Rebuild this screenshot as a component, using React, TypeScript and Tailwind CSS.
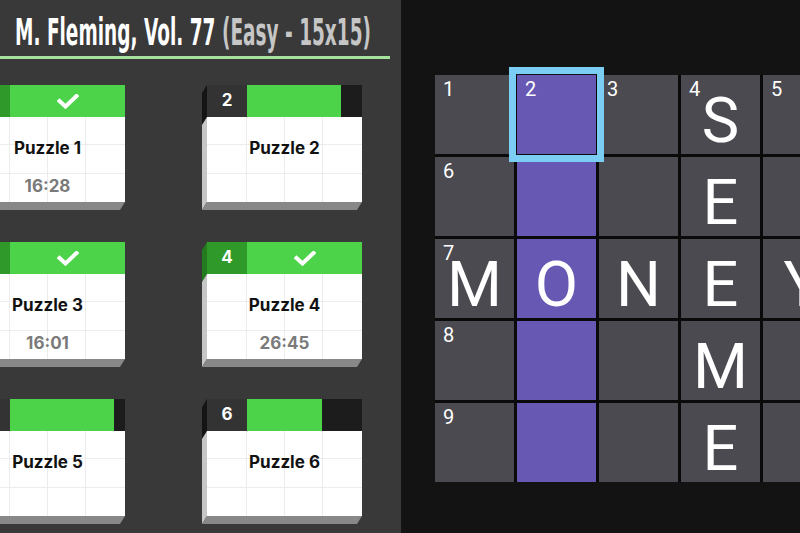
import React from "react";

type Puzzle = { n: number; done: boolean; progress: number; time?: string };

const puzzles: Puzzle[] = [
  { n: 1, done: true, progress: 100, time: "16:28" },
  { n: 2, done: false, progress: 82 },
  { n: 3, done: true, progress: 100, time: "16:01" },
  { n: 4, done: true, progress: 100, time: "26:45" },
  { n: 5, done: false, progress: 90 },
  { n: 6, done: false, progress: 65 },
];

// 5x5 corner of the board: hl = highlighted clue column, letters are filled answers
const board: { num?: number; letter?: string; hl?: boolean }[][] = [
  [{ num: 1 }, { num: 2, hl: true }, { num: 3 }, { num: 4, letter: "S" }, { num: 5 }],
  [{ num: 6 }, { hl: true }, {}, { letter: "E" }, {}],
  [{ num: 7, letter: "M" }, { hl: true, letter: "O" }, { letter: "N" }, { letter: "E" }, { letter: "Y" }],
  [{ num: 8 }, { hl: true }, {}, { letter: "M" }, {}],
  [{ num: 9 }, { hl: true }, {}, { letter: "E" }, {}],
];

function Check() {
  return (
    <svg width="22" height="15" viewBox="0 0 22 15" fill="none">
      <polyline points="2.5,7 8.5,12.5 19.5,2" stroke="white" strokeWidth="4" strokeLinecap="square" />
    </svg>
  );
}

function PuzzleCard({ p }: { p: Puzzle }) {
  return (
    <div className="relative w-[160px] h-[125px]">
      {/* extruded left + bottom faces */}
      <svg className="absolute left-0 top-0" width="160" height="125">
        <polygon points="5,0 5,32 0,40 0,8" fill={p.done ? "#247a1f" : "#141414"} />
        <polygon points="5,32 5,117 0,125 0,40" fill="#c6c6c6" />
        <polygon points="5,117 160,117 155,125 0,125" fill="#888888" />
      </svg>
      <div className="relative ml-[5px] w-[155px]">
        <div className="flex h-[32px]">
          <div
            className={`w-[40px] flex items-center justify-center text-white text-[17px] font-bold ${
              p.done ? "bg-[#2f9a29]" : "bg-[#333333]"
            }`}
          >
            {p.n}
          </div>
          <div className="relative flex-1 bg-[#1c1c1c]">
            <div className="absolute inset-y-0 left-0 bg-[#4dd349]" style={{ width: `${p.progress}%` }} />
            {p.done && (
              <div className="absolute inset-0 flex items-center justify-center">
                <Check />
              </div>
            )}
          </div>
        </div>
        <div className="relative h-[85px] bg-white grid grid-cols-[40px_38px_38px_39px] grid-rows-3">
          {Array.from({ length: 12 }).map((_, i) => (
            <div
              key={i}
              className={`border-[#ececec] ${i % 4 !== 3 ? "border-r" : ""} ${i < 8 ? "border-b" : ""}`}
            />
          ))}
          <div className="absolute inset-x-0 top-[21px] flex flex-col items-center gap-[18px] text-[17px] leading-[20px] font-bold">
            <span className="text-[#111]">Puzzle {p.n}</span>
            {p.time && <span className="text-[#7a7a7a]">{p.time}</span>}
          </div>
        </div>
      </div>
    </div>
  );
}

export default function App() {
  return (
    <div className="flex w-[800px] h-[533px] overflow-hidden" style={{ fontFamily: "Inter, 'Noto Sans', sans-serif" }}>
      <div className="w-[401px] shrink-0 bg-[#393939] overflow-hidden">
        <div className="flex items-stretch mt-[13px] h-[46px] w-[390px] border-b-[3px] border-[#a4e29e]">
          <div className="w-[3px] bg-white" />
          <div className="ml-[15px] pb-[5px] flex items-center">
            <span
              className="inline-block origin-left scale-x-[0.5] whitespace-nowrap text-[37px] leading-none font-bold text-white"
              style={{ fontFamily: "'DejaVu Sans', sans-serif" }}
            >
              M. Fleming, Vol. 77 <span className="text-[#c6c6c6]">(Easy - 15x15)</span>
            </span>
          </div>
        </div>
        <div className="ml-[-35px] mt-[26px] grid grid-cols-[160px_160px] gap-x-[77px] gap-y-[32px]">
          {puzzles.map((p) => (
            <PuzzleCard key={p.n} p={p} />
          ))}
        </div>
      </div>

      <div className="flex-1 bg-[#131313] overflow-hidden pl-[34px] pt-[75px]" style={{ fontFamily: "Roboto, sans-serif" }}>
        <div className="grid grid-cols-[repeat(5,79px)] grid-rows-[repeat(5,79px)] gap-[3px] w-max bg-[#0a0a0a]">
          {board.flat().map((c, i) => (
            <div
              key={i}
              className={`relative flex items-center justify-center pt-[12px] ${
                c.hl ? "bg-[#6759b3]" : "bg-[#4b4a51]"
              } ${i === 1 ? "z-10 outline-[7px] outline-solid outline-[#7ccdf3] outline-offset-[1px]" : ""}`}
            >
              {c.num && (
                <span className="absolute left-[8px] top-[4px] text-[20px] leading-none text-white">{c.num}</span>
              )}
              {c.letter && <span className="text-[63px] leading-none text-white">{c.letter}</span>}
            </div>
          ))}
        </div>
      </div>
    </div>
  );
}
